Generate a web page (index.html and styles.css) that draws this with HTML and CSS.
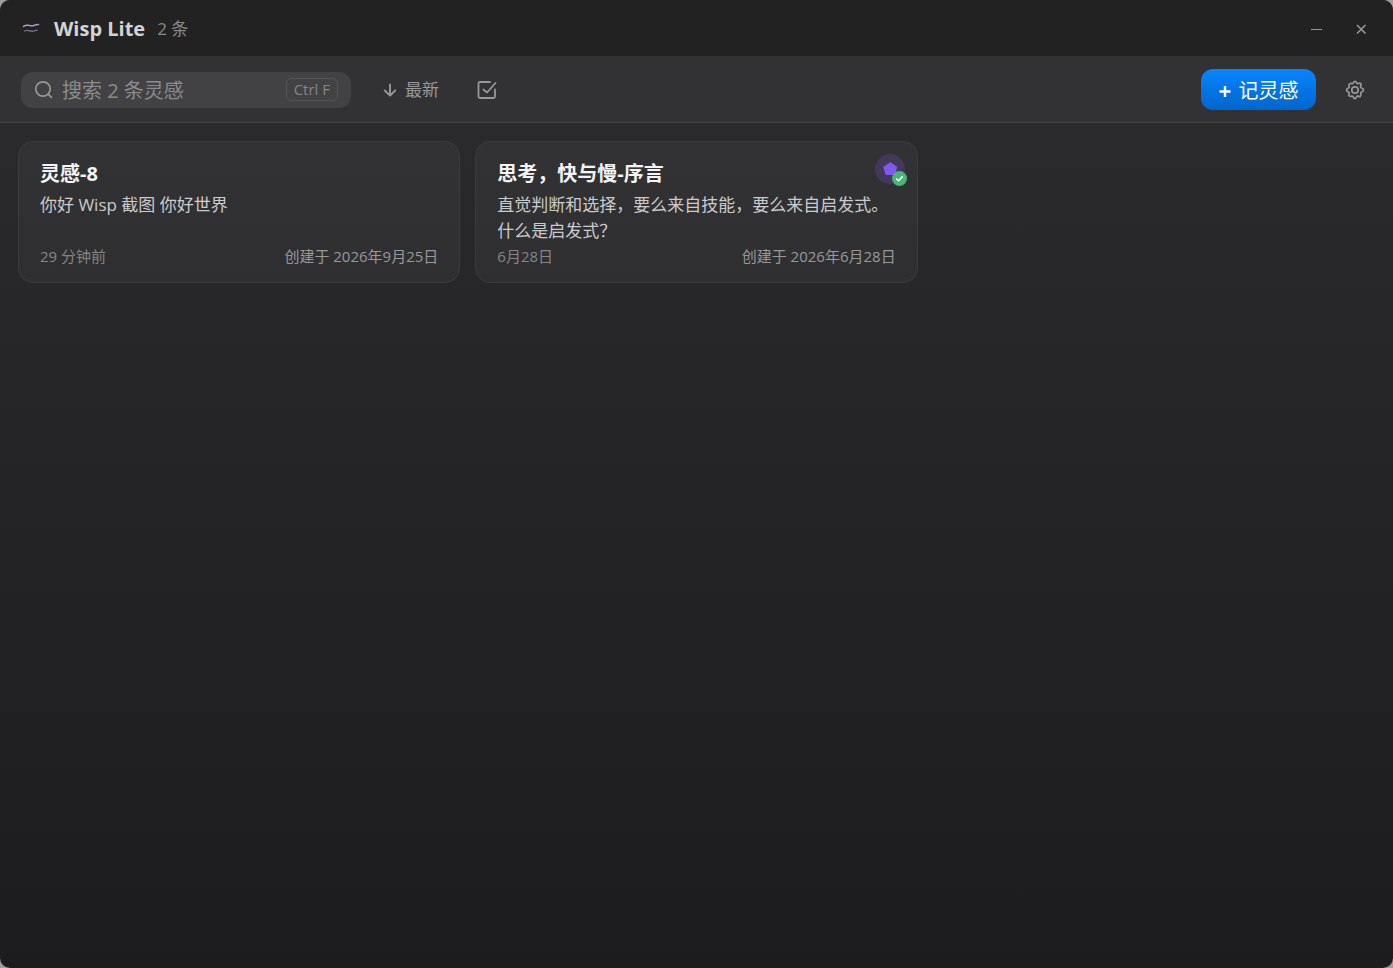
FILE: index.html
```html
<!DOCTYPE html>
<html lang="zh-CN">
<head>
<meta charset="utf-8">
<title>Wisp Lite</title>
<link rel="stylesheet" href="styles.css">
</head>
<body>
<div class="window">
  <header class="titlebar">
    <svg class="logo" viewBox="0 0 20 16" fill="none" stroke-linecap="round" aria-hidden="true">
      <path d="M2.500 5.500C6 2.500 9.500 5.700 13 4.500C15 3.800 16 3.400 17.500 3.500" stroke="#a99bc9" stroke-width="1.600"/>
      <path d="M3.500 10C7 8 9 11 12.500 10.100C14 9.800 15 9.200 16 9.300" stroke="#756c8b" stroke-width="1.400"/>
    </svg>
    <h1 class="app-name">Wisp Lite</h1>
    <span class="count">2 条</span>
    <div class="window-controls">
      <button class="window-button" aria-label="最小化"><svg viewBox="0 0 12 12" fill="none" stroke="currentColor"><path d="M1 6.500h11"/></svg></button>
      <button class="window-button" aria-label="关闭"><svg viewBox="0 0 12 12" fill="none" stroke="currentColor" stroke-width="1.600"><path d="M2 2l8.500 8.500M10.500 2L2 10.500"/></svg></button>
    </div>
  </header>
  <div class="toolbar">
    <label class="search">
      <svg class="search-icon" viewBox="0 0 20 20" fill="none" stroke="currentColor" stroke-width="1.700" stroke-linecap="round"><circle cx="9" cy="9" r="7.200"/><path d="M14.300 14.300l3.200 3.200"/></svg>
      <input class="search-input" type="text" placeholder="搜索 2 条灵感" aria-label="搜索灵感">
      <kbd class="shortcut">Ctrl F</kbd>
    </label>
    <button class="sort">
      <svg viewBox="0 0 14 14" fill="none" stroke="currentColor" stroke-width="1.900" stroke-linecap="round" stroke-linejoin="round"><path d="M7 1.500v11M1.800 7.500L7 12.700l5.200-5.200"/></svg>
      最新
    </button>
    <button class="icon-button select" aria-label="多选">
      <svg viewBox="0 0 20 20" fill="none" stroke="currentColor" stroke-width="1.800" stroke-linecap="round" stroke-linejoin="round"><path d="M13 2H3a1.500 1.500 0 0 0-1.500 1.500v13A1.500 1.500 0 0 0 3 18h13.500a1.500 1.500 0 0 0 1.500-1.500V9.500M6.500 9.500l3.500 3L18.500 3"/></svg>
    </button>
    <button class="create"><svg viewBox="0 0 12 14" stroke="currentColor" stroke-width="2.400" aria-hidden="true"><path d="M6 3v11M0.500 8.500h11"/></svg>记灵感</button>
    <button class="icon-button" aria-label="设置">
      <svg viewBox="0 0 20 20" fill="none" stroke="currentColor" stroke-width="1.700" stroke-linejoin="round"><circle cx="10" cy="10" r="3.200"/><path d="M8.300 3.100Q8.500 1.300 10 1.300T11.700 3.100Q12.400 3.700 13.300 3.500Q15.200 2.700 16 3.900T15.500 6.200Q15.600 7.400 16.500 8Q18.500 8.500 18.500 10T16.600 12Q15.800 12.600 15.700 13.600Q16.500 15.300 15.300 16.200T13 15.900Q12 16 11.600 16.900Q11.200 18.700 9.900 18.700T8.300 16.900Q7.700 16 6.800 16Q5 16.700 4.100 15.700T4.300 13.500Q4.200 12.500 3.400 12Q1.500 11.500 1.500 10T3.400 8Q4.300 7.400 4.300 6.300Q3.400 4.700 4.500 3.900T6.800 3.600Q7.800 3.800 8.300 3.100Z"/></svg>
    </button>
  </div>
  <main class="cards">
    <article class="card">
      <h2 class="card-title">灵感-8</h2>
      <p class="card-body">你好 Wisp 截图 你好世界</p>
      <footer class="card-meta"><span>29 分钟前</span><time class="created">创建于 2026年9月25日</time></footer>
    </article>
    <article class="card">
      <h2 class="card-title">思考，快与慢-序言</h2>
      <p class="card-body">直觉判断和选择，要么来自技能，要么来自启发式。<br>什么是启发式？</p>
      <footer class="card-meta"><span>6月28日</span><time class="created">创建于 2026年6月28日</time></footer>
      <svg class="sync-badge" viewBox="0 0 32 32" role="img" aria-label="已同步">
        <circle cx="15" cy="15" r="15" fill="#43385b"/>
        <path d="M15.300 8.200L22.300 13L19.900 21H10.600L8.200 13Z" fill="#8257ec"/>
        <circle cx="24.500" cy="24.500" r="7.500" fill="#4bb476"/>
        <path d="M21.300 24.500l2.200 2.200l4.300-4.300" fill="none" stroke="#fff" stroke-width="1.600"/>
      </svg>
    </article>
  </main>
</div>
</body>
</html>
```
FILE: styles.css
```css
* {
  box-sizing: border-box;
}

body {
  margin: 0;
  background: #9b9e9b;
  font-family: "Open Sans", "Noto Sans CJK SC", sans-serif;
}

h1, h2, p {
  margin: 0;
}

button {
  padding: 0;
  border: 0;
  background: none;
  color: inherit;
  font: inherit;
}

svg {
  display: block;
  flex: none;
}

.window {
  display: flex;
  flex-direction: column;
  min-height: 100vh;
  overflow: hidden;
  border-radius: 10px;
  background: linear-gradient(#2c2c2e, #1c1c1e);
  color: #98989b;
}

.titlebar {
  display: flex;
  align-items: center;
  height: 56px;
  padding: 2px 10px 0 21px;
  background: #222222;
}

.logo {
  width: 20px;
  height: 16px;
}

.app-name {
  margin-left: 13px;
  color: #d3d3d6;
  font-size: 20px;
  font-weight: 700;
  line-height: 28px;
}

.count {
  margin-left: 12px;
  color: #8a8a8c;
  font-size: 17px;
  line-height: 28px;
}

.window-controls {
  display: flex;
  margin-left: auto;
}

.window-button {
  display: grid;
  place-items: center;
  width: 45px;
  height: 40px;
}

.window-button svg {
  width: 12px;
  height: 12px;
}

.toolbar {
  display: flex;
  align-items: center;
  height: 67px;
  padding: 1px 20px 0 21px;
  border-bottom: 1px solid #414143;
  background: #323234;
}

.search {
  display: flex;
  align-items: center;
  width: 330px;
  height: 36px;
  padding: 0 13px;
  border-radius: 12px;
  background: #424244;
}

.search-icon {
  width: 20px;
  height: 20px;
}

.search-input {
  flex: 1;
  min-width: 0;
  padding: 2px 8px 0;
  border: 0;
  outline: 0;
  background: none;
  color: #e5e5e7;
  font: inherit;
  font-size: 20px;
  line-height: 28px;
}

.search-input::placeholder {
  color: #8b8b8e;
  opacity: 1;
}

.shortcut {
  padding: 0 7px;
  border: 1px solid #545456;
  border-radius: 5px;
  color: #858588;
  font-family: inherit;
  font-size: 15px;
  line-height: 21px;
}

.sort {
  display: flex;
  align-items: center;
  gap: 8px;
  margin-left: 32px;
  font-size: 17px;
  line-height: 24px;
}

.sort svg {
  width: 14px;
  height: 14px;
}

.icon-button {
  display: grid;
  place-items: center;
  width: 36px;
  height: 36px;
}

.icon-button svg {
  width: 20px;
  height: 20px;
}

.select {
  margin-left: 30px;
}

.create {
  display: flex;
  align-items: center;
  justify-content: center;
  gap: 8px;
  width: 115px;
  height: 41px;
  margin: 0 21px 0 auto;
  border-radius: 12px;
  background: linear-gradient(#0a84ff, #0066cc);
  color: #ffffff;
  font-size: 20px;
}

.create svg {
  width: 12px;
  height: 14px;
}

.cards {
  display: grid;
  grid-template-columns: repeat(3, 1fr);
  gap: 15px;
  padding: 18px;
}

.card {
  position: relative;
  display: flex;
  flex-direction: column;
  min-height: 142px;
  padding: 18px 21px 14px;
  border: 1px solid #3c3c3e;
  border-radius: 15px;
  background: linear-gradient(#323234, #2f2f31);
}

.card-title {
  color: #f5f5f7;
  font-size: 20px;
  font-weight: 700;
  line-height: 28px;
}

.card-body {
  margin-top: 4px;
  color: #cbcbce;
  font-size: 17px;
  line-height: 26px;
}

.card-meta {
  display: flex;
  justify-content: space-between;
  margin-top: auto;
  color: #858588;
  font-size: 15px;
  line-height: 24px;
}

.created {
  color: #98989b;
}

.sync-badge {
  position: absolute;
  top: 12px;
  right: 10px;
  width: 32px;
  height: 32px;
}
```
